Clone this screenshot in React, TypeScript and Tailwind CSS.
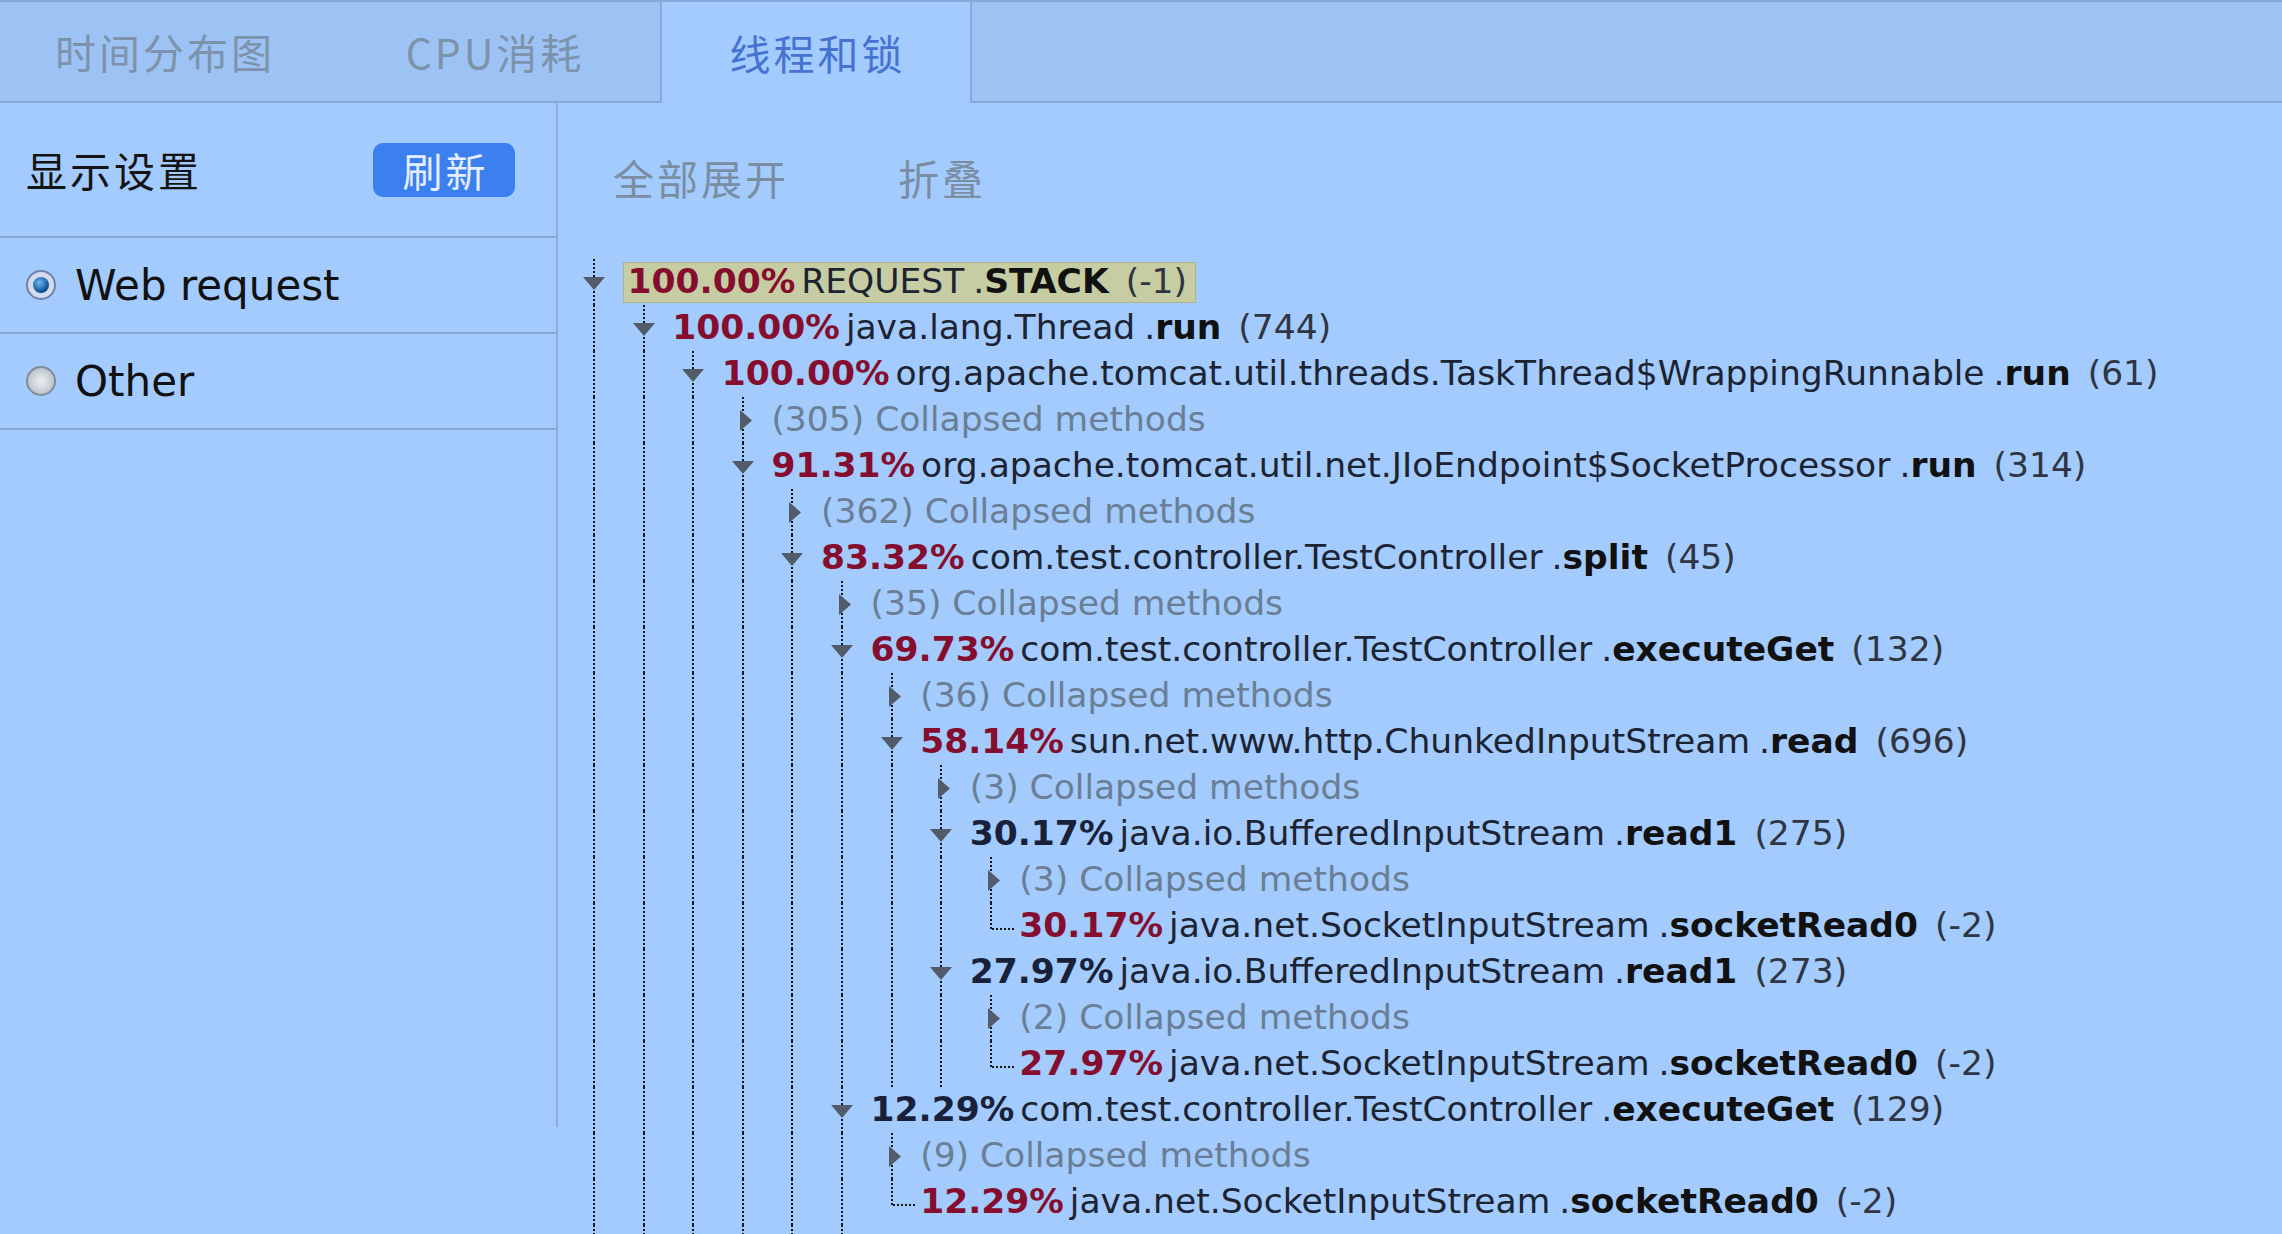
import React from "react";

type Row = {
  level: number;
  kind: "node" | "collapsed" | "leaf";
  pct?: string;
  dark?: boolean;
  cls?: string;
  method?: string;
  count: number;
  hl?: boolean;
};

const rows: Row[] = [
  { level: 0, kind: "node", pct: "100.00%", cls: "REQUEST", method: "STACK", count: -1, hl: true },
  { level: 1, kind: "node", pct: "100.00%", cls: "java.lang.Thread", method: "run", count: 744 },
  { level: 2, kind: "node", pct: "100.00%", cls: "org.apache.tomcat.util.threads.TaskThread$WrappingRunnable", method: "run", count: 61 },
  { level: 3, kind: "collapsed", count: 305 },
  { level: 3, kind: "node", pct: "91.31%", cls: "org.apache.tomcat.util.net.JIoEndpoint$SocketProcessor", method: "run", count: 314 },
  { level: 4, kind: "collapsed", count: 362 },
  { level: 4, kind: "node", pct: "83.32%", cls: "com.test.controller.TestController", method: "split", count: 45 },
  { level: 5, kind: "collapsed", count: 35 },
  { level: 5, kind: "node", pct: "69.73%", cls: "com.test.controller.TestController", method: "executeGet", count: 132 },
  { level: 6, kind: "collapsed", count: 36 },
  { level: 6, kind: "node", pct: "58.14%", cls: "sun.net.www.http.ChunkedInputStream", method: "read", count: 696 },
  { level: 7, kind: "collapsed", count: 3 },
  { level: 7, kind: "node", pct: "30.17%", dark: true, cls: "java.io.BufferedInputStream", method: "read1", count: 275 },
  { level: 8, kind: "collapsed", count: 3 },
  { level: 8, kind: "leaf", pct: "30.17%", cls: "java.net.SocketInputStream", method: "socketRead0", count: -2 },
  { level: 7, kind: "node", pct: "27.97%", dark: true, cls: "java.io.BufferedInputStream", method: "read1", count: 273 },
  { level: 8, kind: "collapsed", count: 2 },
  { level: 8, kind: "leaf", pct: "27.97%", cls: "java.net.SocketInputStream", method: "socketRead0", count: -2 },
  { level: 5, kind: "node", pct: "12.29%", dark: true, cls: "com.test.controller.TestController", method: "executeGet", count: 129 },
  { level: 6, kind: "collapsed", count: 9 },
  { level: 6, kind: "leaf", pct: "12.29%", cls: "java.net.SocketInputStream", method: "socketRead0", count: -2 },
];

const cjk = "font-['Noto_Sans_CJK_SC',sans-serif] tracking-[3px]";
const vdots = "w-[2px] bg-[repeating-linear-gradient(to_bottom,#0f131b_0_2px,transparent_2px_4px)]";
const hdots = "h-[2px] bg-[repeating-linear-gradient(to_right,#0f131b_0_2px,transparent_2px_4px)]";

function Guide({ kind }: { kind: "line" | "down" | "right" | "corner" }) {
  return (
    <div className="relative w-[49.6px] shrink-0 self-stretch">
      {kind === "corner" ? (
        <>
          <div className={`absolute left-[20px] top-0 h-[27px] ${vdots}`} />
          <div className={`absolute left-[22px] top-[25px] w-[24px] ${hdots}`} />
        </>
      ) : (
        <div className={`absolute bottom-0 left-[20px] top-0 ${vdots}`} />
      )}
      {kind === "down" && (
        <svg className="absolute left-[10px] top-[17px]" width="22" height="14" viewBox="0 0 22 14">
          <path d="M0 1H22L11 14Z" fill="#515b69" />
        </svg>
      )}
      {kind === "right" && (
        <svg className="absolute left-[18px] top-[13px]" width="12" height="21" viewBox="0 0 12 21">
          <path d="M0 0L12 10.5L0 21Z" fill="#515b69" />
        </svg>
      )}
    </div>
  );
}

function TreeRow({ row }: { row: Row }) {
  const own = row.kind === "node" ? "down" : row.kind === "collapsed" ? "right" : "corner";
  return (
    <div className="flex h-[46px] items-center whitespace-nowrap">
      {Array.from({ length: row.level }).map((_, i) => (
        <Guide key={i} kind="line" />
      ))}
      <Guide kind={own} />
      {row.kind === "collapsed" ? (
        <span className="text-[#6a7e95]">({row.count}) Collapsed methods</span>
      ) : (
        <div
          className={
            row.hl
              ? "flex h-[41px] items-center border border-[#adb489] bg-[#c6cda3] pl-[4px] pr-[8px]"
              : "flex items-center"
          }
        >
          <span className={row.dark ? "font-bold text-[#18203a]" : "font-bold text-[#850e2e]"}>{row.pct}</span>
          <span className="ml-[6px] text-[#1c2332]">{row.cls}</span>
          <span className="ml-[9px] text-[#1c2332]">.</span>
          <span className="font-bold text-[#111]">{row.method}</span>
          <span className="ml-[17px] text-[#2f3542]">({row.count})</span>
        </div>
      )}
    </div>
  );
}

function Radio({ on }: { on: boolean }) {
  return on ? (
    <div className="flex h-[30px] w-[30px] items-center justify-center rounded-full border-2 border-[#7080aa] bg-[#d3dcef]">
      <div className="h-[16px] w-[16px] rounded-full bg-[radial-gradient(circle_at_40%_35%,#6ab8f2,#0b4a8f_70%)]" />
    </div>
  ) : (
    <div className="h-[30px] w-[30px] rounded-full border-2 border-[#828b99] bg-[radial-gradient(circle,#eef1f4,#aab2be)]" />
  );
}

export default function App() {
  return (
    <div className="h-[1234px] w-[2282px] overflow-hidden bg-[#a3cbfd] font-['DejaVu_Sans',sans-serif]">
      <div className="flex h-[103px] border-b-2 border-t-2 border-[#86aad8] bg-[#9cc3f4]">
        <div className={`flex w-[330px] items-center justify-center text-[41px] text-[#7d92ab] ${cjk}`}>时间分布图</div>
        <div className={`flex w-[330px] items-center justify-center text-[41px] text-[#7d92ab] ${cjk}`}>CPU消耗</div>
        <div
          className={`flex h-[101px] w-[312px] items-center justify-center self-start border-x-2 border-[#86aad8] bg-[#a3cbfd] pl-[3px] text-[41px] text-[#4673d2] ${cjk}`}
        >
          线程和锁
        </div>
      </div>

      <div className="flex">
        <aside className="h-[1024px] w-[558px] shrink-0 border-r-2 border-[#8aadd9]">
          <div className="flex h-[135px] items-center justify-between border-b-2 border-[#87a9d4] pl-[26px] pr-[41px]">
            <span className={`text-[41px] text-[#141414] ${cjk}`}>显示设置</span>
            <button className={`flex h-[54px] w-[142px] items-center justify-center rounded-[10px] bg-[#3c80f0] pl-[3px] text-[40px] text-[#e4eeff] ${cjk}`}>
              刷新
            </button>
          </div>
          <div className="flex h-[96px] items-center gap-[19px] border-b-2 border-[#87a9d4] pl-[26px] text-[42px] text-[#111]">
            <Radio on />
            <span>Web request</span>
          </div>
          <div className="flex h-[96px] items-center gap-[19px] border-b-2 border-[#87a9d4] pl-[26px] text-[42px] text-[#111]">
            <Radio on={false} />
            <span>Other</span>
          </div>
        </aside>

        <main className="flex-1">
          <div className={`flex h-[150px] items-center gap-[109px] pl-[55px] text-[41px] text-[#7a8da3] ${cjk}`}>
            <span>全部展开</span>
            <span>折叠</span>
          </div>
          <div className="pl-[15px] pt-[6px] text-[34.5px]">
            {rows.map((r, i) => (
              <TreeRow key={i} row={r} />
            ))}
            <div className="flex h-[20px]">
              {Array.from({ length: 6 }).map((_, i) => (
                <Guide key={i} kind="line" />
              ))}
            </div>
          </div>
        </main>
      </div>
    </div>
  );
}
